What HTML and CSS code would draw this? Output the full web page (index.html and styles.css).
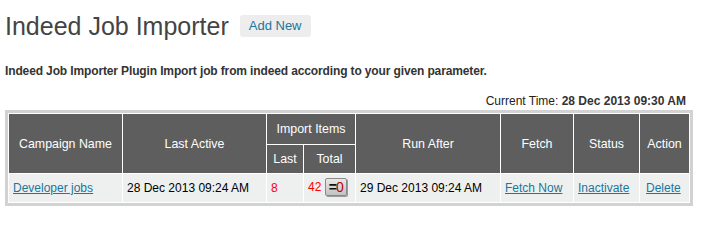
FILE: index.html
```html
<!DOCTYPE html>
<html>
<head>
<meta charset="utf-8">
<link rel="stylesheet" href="styles.css">
</head>
<body>
<div class="wrap">
  <div class="title-row">
    <h2 class="title">Indeed Job Importer</h2>
    <a class="add-new" href="#">Add New</a>
  </div>
  <p class="desc">Indeed Job Importer Plugin Import job from indeed according to your given parameter.</p>
  <div class="current-time">Current Time: <b>28 Dec 2013 09:30 AM</b></div>
  <div class="table-box">
    <table class="jobs">
      <colgroup>
        <col class="c-name"><col class="c-active"><col class="c-last"><col class="c-total"><col class="c-run"><col class="c-fetch"><col class="c-status"><col class="c-action">
      </colgroup>
      <thead>
        <tr class="h1">
          <th rowspan="2">Campaign Name</th>
          <th rowspan="2">Last Active</th>
          <th colspan="2">Import Items</th>
          <th rowspan="2">Run After</th>
          <th rowspan="2">Fetch</th>
          <th rowspan="2">Status</th>
          <th rowspan="2">Action</th>
        </tr>
        <tr class="h2">
          <th>Last</th>
          <th>Total</th>
        </tr>
      </thead>
      <tbody>
        <tr>
          <td><a href="#">Developer jobs</a></td>
          <td>28 Dec 2013 09:24 AM</td>
          <td class="num">8</td>
          <td class="num">42 <span class="reset"><span class="eq">=</span><span class="zero">0</span></span></td>
          <td>29 Dec 2013 09:24 AM</td>
          <td><a href="#">Fetch Now</a></td>
          <td><a href="#">Inactivate</a></td>
          <td class="act"><a href="#">Delete</a></td>
        </tr>
      </tbody>
    </table>
  </div>
</div>
</body>
</html>
```
FILE: styles.css
```css
html, body {
  margin: 0;
  padding: 0;
  background: #fff;
}
body {
  font-family: "Liberation Sans", Arial, sans-serif;
  font-size: 12px;
  color: #333;
}
.wrap {
  padding-left: 5px;
  width: 688px;
}
.title-row {
  display: flex;
  align-items: center;
  height: 30px;
  margin-top: 11px;
}
.title {
  margin: 0;
  font-weight: normal;
  font-size: 25px;
  line-height: 30px;
  color: #444;
}
.add-new {
  margin-left: 11px;
  height: 22px;
  line-height: 22px;
  padding: 0 9px;
  font-size: 13px;
  background: #ededed;
  color: #21759b;
  border-radius: 3px;
  text-decoration: none;
}
.desc {
  margin: 22px 0 0;
  font-weight: bold;
  font-size: 12px;
  line-height: 16px;
  letter-spacing: -0.13px;
  color: #333;
}
.current-time {
  margin-top: 14px;
  margin-bottom: 1px;
  line-height: 16px;
  text-align: right;
  padding-right: 7px;
  color: #222;
}
.current-time b {
  color: #333;
}
.table-box {
  border: 3px solid #d2d2d2;
}
.jobs {
  table-layout: fixed;
  width: 682px;
  border-collapse: separate;
  border-spacing: 1px;
  background: #fff;
}
.c-name { width: 113px; }
.c-active { width: 143px; }
.c-last { width: 36px; }
.c-total { width: 51px; }
.c-run { width: 144px; }
.c-fetch { width: 72px; }
.c-status { width: 65px; }
.c-action { width: 49px; }
.jobs th {
  background: #5e5e5e;
  color: #fff;
  font-weight: normal;
  font-size: 12.4px;
  text-align: center;
  padding: 0;
}
.jobs .h1 th {
  height: 30px;
}
.jobs .h2 th {
  height: 28px;
}
.jobs td {
  background: #eef0ef;
  color: #000;
  height: 28px;
  padding: 0 0 0 4px;
  font-size: 12px;
  white-space: nowrap;
  vertical-align: middle;
}
.jobs td.act {
  padding-left: 6px;
}
.jobs a {
  color: #21759b;
  text-decoration: underline;
}
.jobs td.num {
  color: #f00;
}
.reset {
  display: inline-block;
  vertical-align: middle;
  width: 20px;
  height: 16px;
  margin-top: -2px;
  border: 1px solid #8a8a8a;
  border-radius: 2px;
  background: linear-gradient(#e8e8e8, #c2c2c2);
  box-shadow: 1px 1px 0 #9a9a9a;
  text-align: center;
  font-size: 14px;
  line-height: 16px;
  letter-spacing: -1px;
}
.reset .eq {
  color: #111;
  font-weight: bold;
}
.reset .zero {
  color: #c00000;
}
```
